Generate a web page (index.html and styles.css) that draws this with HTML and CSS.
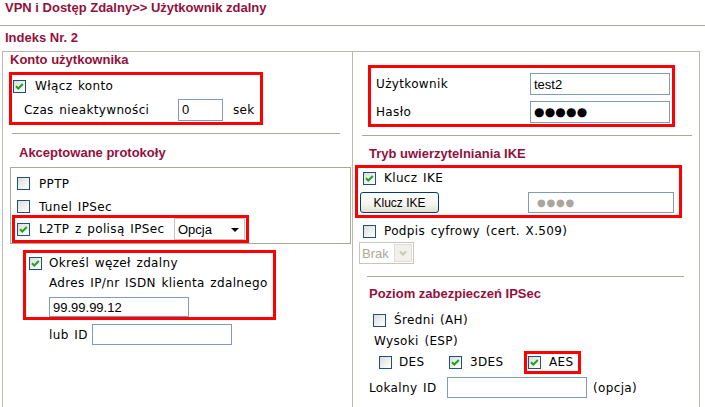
FILE: index.html
```html
<!DOCTYPE html>
<html lang="pl">
<head>
<meta charset="utf-8">
<title>Użytkownik zdalny</title>
<link rel="stylesheet" href="styles.css">
</head>
<body>
<div class="title">VPN i Dostęp Zdalny&gt;&gt; Użytkownik zdalny</div>
<div class="index">Indeks Nr. 2</div>
<div class="panel">
  <div class="col col-left">
    <div class="head head-first">Konto użytkownika</div>
    <div class="hl acct">
      <div class="row acct-r1"><span class="cb on"><svg viewBox="0 0 11 11"><path d="M2 5.2 L4.3 7.5 L8.8 3"/></svg></span><span class="gap9">Włącz konto</span></div>
      <div class="row acct-r2"><span class="lbl-czas">Czas nieaktywności</span><span class="inp w45">0</span><span class="unit">sek</span></div>
    </div>
    <div class="sep sep-l1"></div>
    <div class="head head-proto">Akceptowane protokoły</div>
    <div class="protos">
      <div class="row prow"><span class="cb"></span><span class="gap9">PPTP</span></div>
      <div class="row prow"><span class="cb"></span><span class="gap9">Tunel IPSec</span></div>
      <div class="row hl l2tp"><span class="cb on"><svg viewBox="0 0 11 11"><path d="M2 5.2 L4.3 7.5 L8.8 3"/></svg></span><span class="gap9">L2TP z polisą IPSec</span><span class="sel">Opcja<i class="arr"></i></span></div>
    </div>
    <div class="hl remote">
      <div class="row rem-r1"><span class="cb on"><svg viewBox="0 0 11 11"><path d="M2 5.2 L4.3 7.5 L8.8 3"/></svg></span><span class="gap7">Określ węzeł zdalny</span></div>
      <div class="row rem-r2">Adres IP/nr ISDN klienta zdalnego</div>
      <div class="inp w140 rem-inp">99.99.99.12</div>
    </div>
    <div class="row lub"><span class="lbl-lub">lub ID</span><span class="inp w140 h21"></span></div>
  </div>
  <div class="col col-right">
    <div class="hl cred">
      <div class="row cred-row"><span class="lbl-cred">Użytkownik</span><span class="inp w140">test2</span></div>
      <div class="row cred-row cred-gap"><span class="lbl-cred">Hasło</span><span class="inp w140 pw">●●●●●</span></div>
    </div>
    <div class="sep sep-r1"></div>
    <div class="head head-ike">Tryb uwierzytelniania IKE</div>
    <div class="hl ike">
      <div class="row ike-r1"><span class="cb on"><svg viewBox="0 0 11 11"><path d="M2 5.2 L4.3 7.5 L8.8 3"/></svg></span><span class="gap8">Klucz IKE</span></div>
      <div class="row ike-r2"><span class="btn">Klucz IKE</span><span class="inp w146 h21 pw-gray">●●●●</span></div>
    </div>
    <div class="row podpis"><span class="cb"></span><span class="gap8">Podpis cyfrowy (cert. X.509)</span></div>
    <div class="sel-dis"><span class="sel-dis-txt">Brak</span><span class="sel-dis-btn"><svg viewBox="0 0 10 8"><path d="M2 2.5 L5 5.5 L8 2.5"/></svg></span></div>
    <div class="sep sep-r2"></div>
    <div class="head head-sec">Poziom zabezpieczeń IPSec</div>
    <div class="row sredni"><span class="cb"></span><span class="gap8">Średni (AH)</span></div>
    <div class="row wysoki">Wysoki (ESP)</div>
    <div class="row esp">
      <span class="esp-item w70"><span class="cb"></span><span class="gap7">DES</span></span>
      <span class="esp-item w75"><span class="cb on"><svg viewBox="0 0 11 11"><path d="M2 5.2 L4.3 7.5 L8.8 3"/></svg></span><span class="gap8">3DES</span></span>
      <span class="esp-item hl aes"><span class="cb on"><svg viewBox="0 0 11 11"><path d="M2 5.2 L4.3 7.5 L8.8 3"/></svg></span><span class="gap8">AES</span></span>
    </div>
    <div class="row lokalny"><span class="lbl-lok">Lokalny ID</span><span class="inp w140 h21"></span><span class="opcja">(opcja)</span></div>
  </div>
</div>
</body>
</html>
```
FILE: styles.css
```css
html, body {
  margin: 0;
  padding: 0;
  background: #fff;
}
body {
  width: 705px;
  height: 407px;
  overflow: hidden;
  font: 12px "DejaVu Sans", Verdana, sans-serif;
  letter-spacing: 0.35px;
  word-spacing: 1.5px;
  color: #000;
}

.title {
  height: 25px;
  line-height: 20px;
  padding-left: 5px;
  border-bottom: 1px solid #aca899;
  font: bold 13px "Liberation Sans", Arial, sans-serif;
  letter-spacing: 0;
  word-spacing: 0;
  color: #94103c;
}
.index {
  height: 20px;
  line-height: 20px;
  margin-top: 4px;
  margin-bottom: 1px;
  padding-left: 5px;
  font: bold 13px "Liberation Sans", Arial, sans-serif;
  letter-spacing: 0;
  word-spacing: 0;
  color: #94103c;
}

.panel {
  margin-left: 2px;
  width: 698px;
  height: 360px;
  box-sizing: border-box;
  border: 1px solid #bdb9aa;
  border-bottom: none;
  display: flex;
}
.col { box-sizing: border-box; }
.col-left {
  width: 350px;
  border-right: 1px solid #bdb9aa;
}
.col-right {
  width: 346px;
}

.head {
  height: 20px;
  line-height: 20px;
  padding-left: 16px;
  font: bold 13px "Liberation Sans", Arial, sans-serif;
  letter-spacing: 0;
  word-spacing: 0;
  color: #94103c;
}
.head-first { padding-left: 7px; }
.head-proto { margin-top: 11px; }
.head-ike { margin-top: 10px; }
.head-sec { margin-top: 9px; }

.row {
  display: flex;
  align-items: center;
  white-space: nowrap;
}

.hl {
  border: 3px solid #ff0000;
  box-sizing: border-box;
}

.sep {
  height: 0;
  border-top: 1px solid #aca899;
}
.sep-l1 { margin: 8px 0 0 9px; width: 328px; }
.sep-r1 { margin: 8px 0 0 9px; width: 330px; }
.sep-r2 { margin: 12px 0 0 14px; width: 317px; }

/* checkbox */
.cb {
  width: 13px;
  height: 13px;
  box-sizing: border-box;
  border: 1px solid #1c5180;
  background: linear-gradient(135deg, #dcdcd7 0%, #f2f2ef 60%, #ffffff 100%);
  flex: none;
  display: inline-flex;
}
.cb svg {
  width: 11px;
  height: 11px;
}
.cb svg path {
  fill: none;
  stroke: #21a121;
  stroke-width: 2;
}
.gap7 { margin-left: 7px; }
.gap8 { margin-left: 8px; }
.gap9 { margin-left: 9px; }

/* inputs */
.inp {
  display: inline-flex;
  align-items: center;
  box-sizing: border-box;
  height: 22px;
  border: 1px solid #7f9db9;
  background: #fff;
  padding-left: 3px;
  font: 13px "Liberation Sans", Arial, sans-serif;
  letter-spacing: 0;
  word-spacing: 0;
  flex: none;
}
.w45 { width: 45px; }
.w140 { width: 140px; }
.w146 { width: 146px; }
.h21 { height: 21px; }
.pw {
  font: 12px "DejaVu Sans", sans-serif;
  letter-spacing: 0.2px;
  padding-left: 3px;
}
.pw-gray {
  font: 10px "DejaVu Sans", sans-serif;
  letter-spacing: 0.8px;
  color: #aaa69e;
  padding-left: 8px;
}

/* left column */
.acct {
  margin-left: 6px;
  width: 254px;
  height: 53px;
}
.acct-r1 { height: 22px; padding-left: 1px; }
.acct-r2 { height: 25px; }
.lbl-czas { width: 166px; padding-left: 12px; box-sizing: border-box; flex: none; }
.unit { margin-left: 10px; }

.protos {
  margin: 2px 0 0 7px;
  width: 341px;
  box-sizing: border-box;
  border: 1px solid #aca899;
  padding-top: 4px;
}
.prow { height: 23px; padding-left: 6px; }
.l2tp {
  margin: -3px 0 0 1px;
  width: 237px;
  height: 28px;
  padding: 0 1px 0 2px;
}
.sel {
  margin-left: auto;
  width: 71px;
  height: 22px;
  box-sizing: border-box;
  border: 1px solid #c3c3c3;
  background: #fff;
  display: inline-flex;
  align-items: center;
  padding-left: 3px;
  font: 13px "Liberation Sans", Arial, sans-serif;
  letter-spacing: 0;
  position: relative;
}
.arr {
  position: absolute;
  right: 5px;
  top: 9px;
  width: 0;
  height: 0;
  border-left: 4px solid transparent;
  border-right: 4px solid transparent;
  border-top: 4px solid #000;
}

.remote {
  margin: 6px 0 0 20px;
  width: 253px;
  height: 70px;
}
.rem-r1 { height: 20px; padding-left: 3px; }
.rem-r2 { height: 20px; padding-left: 23px; }
.rem-inp { margin: 4px 0 0 23px; height: 20px; }

.lub { margin-top: 4px; padding-left: 46px; height: 21px; }
.lbl-lub { width: 43px; }

/* right column */
.cred {
  margin: 13px 0 0 15px;
  width: 307px;
  height: 62px;
  padding: 5px 0 1px 5px;
}
.cred-row { height: 22px; }
.cred-gap { margin-top: 6px; }
.lbl-cred { width: 154px; }

.ike {
  margin: -1px 0 0 2px;
  width: 327px;
  height: 53px;
}
.ike-r1 { height: 20px; padding-left: 5px; }
.ike-r2 {
  margin-top: 4px;
  height: 21px;
  justify-content: space-between;
  padding: 0 5px 0 2px;
}
.btn {
  width: 79px;
  height: 21px;
  box-sizing: border-box;
  border: 1px solid #003c74;
  border-radius: 3px;
  background: linear-gradient(#ffffff 0%, #f4f3ee 60%, #e3e0d2 100%);
  display: inline-flex;
  align-items: center;
  justify-content: center;
  font: 12px "Liberation Sans", Arial, sans-serif;
  letter-spacing: 0;
  word-spacing: 0;
}

.podpis { margin-top: 3px; height: 20px; padding-left: 10px; }

.sel-dis {
  margin: 1px 0 0 6px;
  width: 55px;
  height: 22px;
  box-sizing: border-box;
  border: 1px solid #c9c7ba;
  display: flex;
  align-items: stretch;
  background: #fff;
}
.sel-dis-txt {
  flex: 1;
  display: flex;
  align-items: center;
  padding-left: 2px;
  color: #aca899;
  font: 13px "Liberation Sans", Arial, sans-serif;
  letter-spacing: 0;
}
.sel-dis-btn {
  width: 16px;
  margin: 1px;
  background: #f1f0ea;
  border: 1px solid #e0ded4;
  display: flex;
  align-items: center;
  justify-content: center;
}
.sel-dis-btn svg { width: 10px; height: 8px; }
.sel-dis-btn path { fill: none; stroke: #c9c7ba; stroke-width: 2; }

.sredni { margin-top: 4px; height: 20px; padding-left: 20px; }
.wysoki { margin-top: 1px; height: 20px; padding-left: 21px; }
.esp { margin-top: 1px; height: 20px; padding-left: 26px; }
.esp-item { display: inline-flex; align-items: center; flex: none; }
.w70 { width: 70px; }
.w75 { width: 75px; }
.aes {
  width: 57px;
  height: 23px;
  padding-left: 1px;
}

.lokalny { margin-top: 5px; height: 21px; padding-left: 16px; }
.lbl-lok { width: 78px; }
.opcja { margin-left: 6px; }
```
